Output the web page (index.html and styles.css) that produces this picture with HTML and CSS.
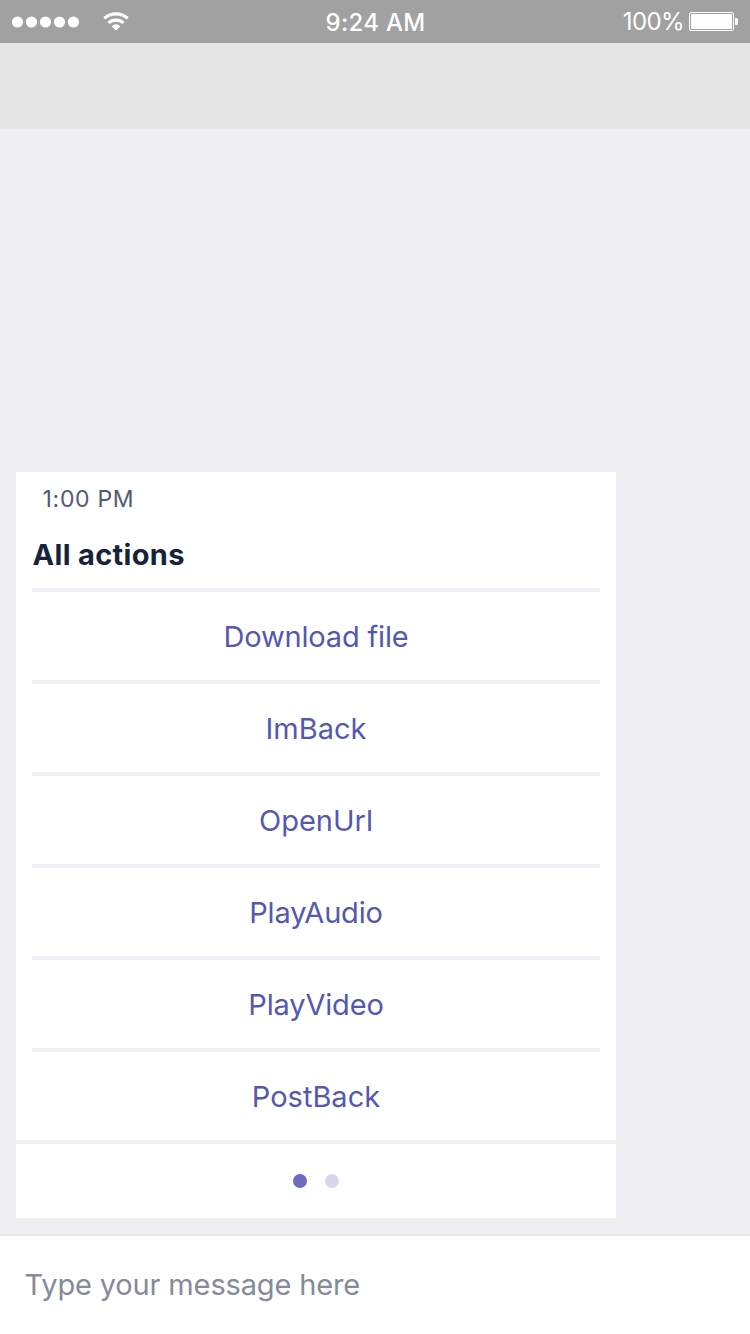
FILE: index.html
```html
<!DOCTYPE html>
<html lang="en">
<head>
<meta charset="utf-8">
<title>All actions</title>
<link rel="stylesheet" href="styles.css">
</head>
<body>
<div class="screen">
  <header class="status">
    <div class="status-left">
      <svg class="signal" width="68" height="12" viewBox="0 0 68 12" fill="#fff"><circle cx="6.5" cy="6" r="5.6"/><circle cx="20.5" cy="6" r="5.6"/><circle cx="34.5" cy="6" r="5.6"/><circle cx="48.5" cy="6" r="5.6"/><circle cx="62.4" cy="6" r="5.6"/></svg>
      <svg class="wifi" width="26" height="19" viewBox="0 0 26 19" fill="none" stroke="#fff" stroke-width="3.2"><path d="M1.3 6.4A17.5 17.5 0 0 1 24.7 6.4"/><path d="M5.5 10.9A11.3 11.3 0 0 1 20.5 10.9"/><path d="M13 18.6L8.7 14.3Q13 10.4 17.3 14.3Z" fill="#fff" stroke="none"/></svg>
    </div>
    <div class="clock">9:24 AM</div>
    <div class="status-right">
      <span class="percent">100%</span>
      <svg class="battery" width="50" height="19" viewBox="0 0 50 19"><rect x=".5" y=".5" width="44" height="18" rx="1.5" fill="none" stroke="#fff"/><rect x="2" y="2" width="41" height="15" fill="#fff"/><path d="M46 6h1.5q1.5 0 1.5 1.5v4q0 1.5-1.5 1.5H46z" fill="#fff"/></svg>
    </div>
  </header>
  <div class="navbar"></div>
  <main class="chat">
    <section class="card">
      <div class="time">1:00 PM</div>
      <h1 class="title">All actions</h1>
      <div class="actions">
        <div class="action tight">Download file</div>
        <div class="action">ImBack</div>
        <div class="action">OpenUrl</div>
        <div class="action tight">PlayAudio</div>
        <div class="action tight">PlayVideo</div>
        <div class="action">PostBack</div>
      </div>
      <div class="pager"><i class="dot dot-active"></i><i class="dot"></i></div>
    </section>
  </main>
  <footer class="composer">Type your message here</footer>
</div>
</body>
</html>
```
FILE: styles.css
```css
* { box-sizing: border-box; }
body { margin: 0; font-family: Inter, "Liberation Sans", sans-serif; }
.screen { width: 750px; height: 1334px; display: flex; flex-direction: column; background: #efeff4; overflow: hidden; }
.status { height: 43px; flex: none; display: grid; grid-template-columns: 1fr auto 1fr; align-items: center; background: #a1a1a1; color: #fff; padding: 0 11px; font-size: 24px; }
.status-left, .status-right { display: flex; align-items: center; }
.signal { display: block; }
.wifi { display: block; margin-left: 24px; }
.clock { font-weight: 500; letter-spacing: 0.3px; padding: 1px 0 0 1px; }
.status-right { justify-content: flex-end; gap: 5px; }
.percent { letter-spacing: -0.6px; }
.battery { display: block; }
.navbar { height: 86px; flex: none; background: #e6e6e6; }
.chat { flex: 1; display: flex; align-items: flex-end; padding: 0 0 16px 16px; }
.card { width: 600px; height: 746px; background: #fff; }
.time { height: 54px; padding-left: 26.5px; line-height: 54px; font-size: 23px; letter-spacing: 0.7px; color: #525a6e; }
.title { height: 62px; margin: 0; padding-left: 16.5px; line-height: 57px; font-size: 29px; font-weight: 700; letter-spacing: 0.32px; color: #16233a; }
.actions { padding: 0 16px; }
.action { height: 92px; border-top: 4px solid #edf0f5; display: flex; align-items: center; justify-content: center; color: #5558af; font-size: 29px; }
.tight { letter-spacing: -0.17px; }
.pager { height: 78px; border-top: 4px solid #edf0f5; display: flex; align-items: center; justify-content: center; gap: 18px; }
.dot { width: 14px; height: 14px; border-radius: 50%; background: #d8d7eb; }
.dot-active { background: #6c6bbd; }
.composer { height: 100px; flex: none; border-top: 2px solid #e7e6eb; background: #fff; padding-left: 24.5px; line-height: 97px; font-size: 29px; letter-spacing: -0.15px; color: #858b99; }
```
